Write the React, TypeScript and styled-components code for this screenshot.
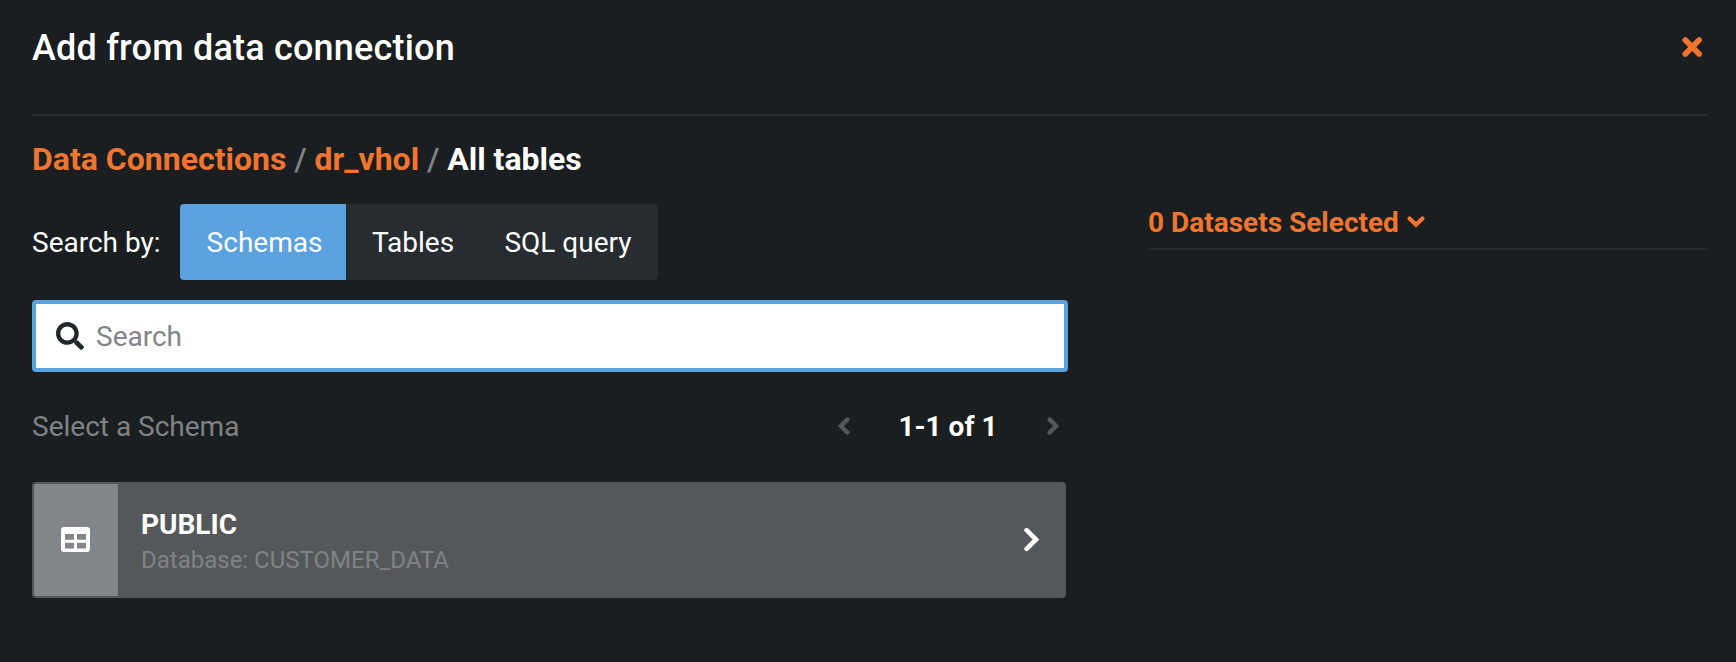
import React from "react";
import styled, { createGlobalStyle } from "styled-components";
import { FaSearch } from "react-icons/fa";

const colors = {
  bg: "#1a1e20",
  line: "#272b2e",
  panel: "#272c30",
  orange: "#f0752f",
  blue: "#5aa2e0",
  card: "#54585a",
  tile: "#828589",
  muted: "#808385",
};

const GlobalStyle = createGlobalStyle`
  * { box-sizing: border-box; }
  body {
    margin: 0;
    background: ${colors.bg};
    color: #fff;
    font-family: Roboto, "Liberation Sans", sans-serif;
    font-size: 28px;
    line-height: 32px;
  }
  button, input { font: inherit; color: inherit; border: 0; padding: 0; margin: 0; background: none; }
  svg { display: block; flex: none; }
`;

const Dialog = styled.main`
  height: 662px;
  padding: 0 28px 0 32px;
  background: ${colors.bg};
  overflow: hidden;
`;

const Header = styled.header`
  display: flex;
  justify-content: space-between;
  height: 116px;
  padding: 26px 5px 0 0;
  border-bottom: 2px solid ${colors.line};
`;

const Title = styled.h1`
  margin: 0;
  font-size: 36px;
  line-height: 44px;
  font-weight: 500;
  letter-spacing: 0.2px;
`;

const IconButton = styled.button`
  display: flex;
  align-items: center;
  height: 44px;
  padding-bottom: 2px;
  color: ${(p) => p.color};
`;

const Breadcrumb = styled.nav`
  display: flex;
  gap: 7.8px;
  height: 88px;
  padding-top: 23px;
  font-size: 32px;
  line-height: 40px;
  font-weight: 700;
`;

const Crumb = styled.span<{ $link?: boolean }>`
  color: ${(p) => (p.$link ? colors.orange : "#fff")};
`;

const Slash = styled.span`
  color: ${colors.muted};
  font-weight: 500;
`;

const Columns = styled.div`
  display: grid;
  grid-template-columns: 1036px 560px;
  justify-content: space-between;
`;

const SearchBy = styled.div`
  display: flex;
  align-items: center;
  gap: 20px;
  height: 76px;
`;

const SearchByLabel = styled.span`
  width: 128px;
  padding-top: 2px;
  white-space: nowrap;
`;

const Segments = styled.div`
  display: flex;
  width: 478px;
  height: 76px;
  border-radius: 4px;
  overflow: hidden;
  background: ${colors.panel};
`;

const Segment = styled.button<{ $active?: boolean; $width: number }>`
  width: ${(p) => p.$width}px;
  padding: 2px 0 0 ${(p) => (p.$active ? 3 : 0)}px;
  white-space: nowrap;
  background: ${(p) => (p.$active ? colors.blue : "transparent")};
`;

const SearchField = styled.label`
  display: flex;
  align-items: center;
  gap: 12px;
  height: 72px;
  margin-top: 20px;
  padding: 0 20px;
  border: 4px solid ${colors.blue};
  border-radius: 4px;
  background: #fff;
  color: #22272b;
`;

const SearchInput = styled.input`
  flex: 1;
  padding-top: 2px;
  outline: 0;
  &::placeholder { color: ${colors.tile}; opacity: 1; }
`;

const ListHeader = styled.div`
  display: flex;
  align-items: center;
  justify-content: space-between;
  height: 110px;
  padding-right: 9px;
  color: ${colors.muted};
`;

const Pager = styled.div`
  display: flex;
  align-items: center;
`;

const PageRange = styled.span`
  width: 197px;
  padding-right: 1px;
  text-align: center;
  color: #fff;
  font-weight: 700;
`;

const SchemaCard = styled.div`
  display: flex;
  align-items: center;
  width: 1034px;
  height: 116px;
  padding: 2px 26px 2px 2px;
  border-radius: 4px;
  background: ${colors.card};
`;

const Tile = styled.div`
  display: flex;
  align-items: center;
  justify-content: center;
  width: 84px;
  height: 112px;
  padding: 0 1px 1px 0;
  border-radius: 2px 0 0 2px;
  background: ${colors.tile};
`;

const SchemaText = styled.div`
  flex: 1;
  padding-left: 23px;
`;

const SchemaName = styled.div`
  height: 40px;
  padding-top: 1px;
  line-height: 40px;
  font-weight: 700;
`;

const SchemaMeta = styled.div`
  font-size: 24px;
  line-height: 32px;
  color: ${colors.muted};
`;

const Selected = styled.div`
  display: flex;
  gap: 8px;
  height: 46px;
  padding-top: 3px;
  border-bottom: 2px solid ${colors.line};
  color: ${colors.orange};
  font-weight: 700;
`;

const CaretSlot = styled.span`
  padding-top: 9px;
`;

const Stroke = ({ w, h, d, sw }: { w: number; h: number; d: string; sw: number }) => (
  <svg width={w} height={h} viewBox={`0 0 ${w} ${h}`} fill="none" stroke="currentColor"
    strokeWidth={sw} strokeLinecap="round" strokeLinejoin="miter">
    <path d={d} />
  </svg>
);

const TableIcon = () => (
  <svg width={29} height={25} viewBox="0 0 29 25" fill="currentColor" fillRule="evenodd">
    <path d="M3 0H26Q29 0 29 3V22Q29 25 26 25H3Q0 25 0 22V3Q0 0 3 0ZM4 7V12.8H13V7ZM16 7V12.8H25V7ZM4 15.8V21.4H13V15.8ZM16 15.8V21.4H25V15.8Z" />
  </svg>
);

export default function App() {
  return (
    <>
      <GlobalStyle />
      <Dialog>
        <Header>
          <Title>Add from data connection</Title>
          <IconButton color={colors.orange} aria-label="Close">
            <Stroke w={21} h={20} sw={5.7} d="M3.3 3.1 17.1 16.9M17.1 3.1 3.3 16.9" />
          </IconButton>
        </Header>
        <Breadcrumb>
          <Crumb $link>Data Connections</Crumb>
          <Slash>/</Slash>
          <Crumb $link>dr_vhol</Crumb>
          <Slash>/</Slash>
          <Crumb>All tables</Crumb>
        </Breadcrumb>
        <Columns>
          <section>
            <SearchBy>
              <SearchByLabel>Search by:</SearchByLabel>
              <Segments>
                <Segment $active $width={166}>Schemas</Segment>
                <Segment $width={134}>Tables</Segment>
                <Segment $width={176}>SQL query</Segment>
              </Segments>
            </SearchBy>
            <SearchField>
              <FaSearch size={28} />
              <SearchInput placeholder="Search" />
            </SearchField>
            <ListHeader>
              <span>Select a Schema</span>
              <Pager>
                <IconButton color={colors.card} aria-label="Previous page">
                  <Stroke w={12} h={18} sw={4.4} d="M9.3 2.6 2.8 9 9.3 15.4" />
                </IconButton>
                <PageRange>1-1 of 1</PageRange>
                <IconButton color={colors.card} aria-label="Next page">
                  <Stroke w={12} h={18} sw={4.4} d="M2.7 2.6 9.2 9 2.7 15.4" />
                </IconButton>
              </Pager>
            </ListHeader>
            <SchemaCard>
              <Tile><TableIcon /></Tile>
              <SchemaText>
                <SchemaName>PUBLIC</SchemaName>
                <SchemaMeta>Database: CUSTOMER_DATA</SchemaMeta>
              </SchemaText>
              <Stroke w={16} h={24} sw={4.6} d="M2.6 2.2 12 11.5 2.6 20.8" />
            </SchemaCard>
          </section>
          <aside>
            <Selected>
              0 Datasets Selected
              <CaretSlot>
                <Stroke w={18} h={12} sw={4.2} d="M2.6 2.4 9 8.8 15.4 2.4" />
              </CaretSlot>
            </Selected>
          </aside>
        </Columns>
      </Dialog>
    </>
  );
}
